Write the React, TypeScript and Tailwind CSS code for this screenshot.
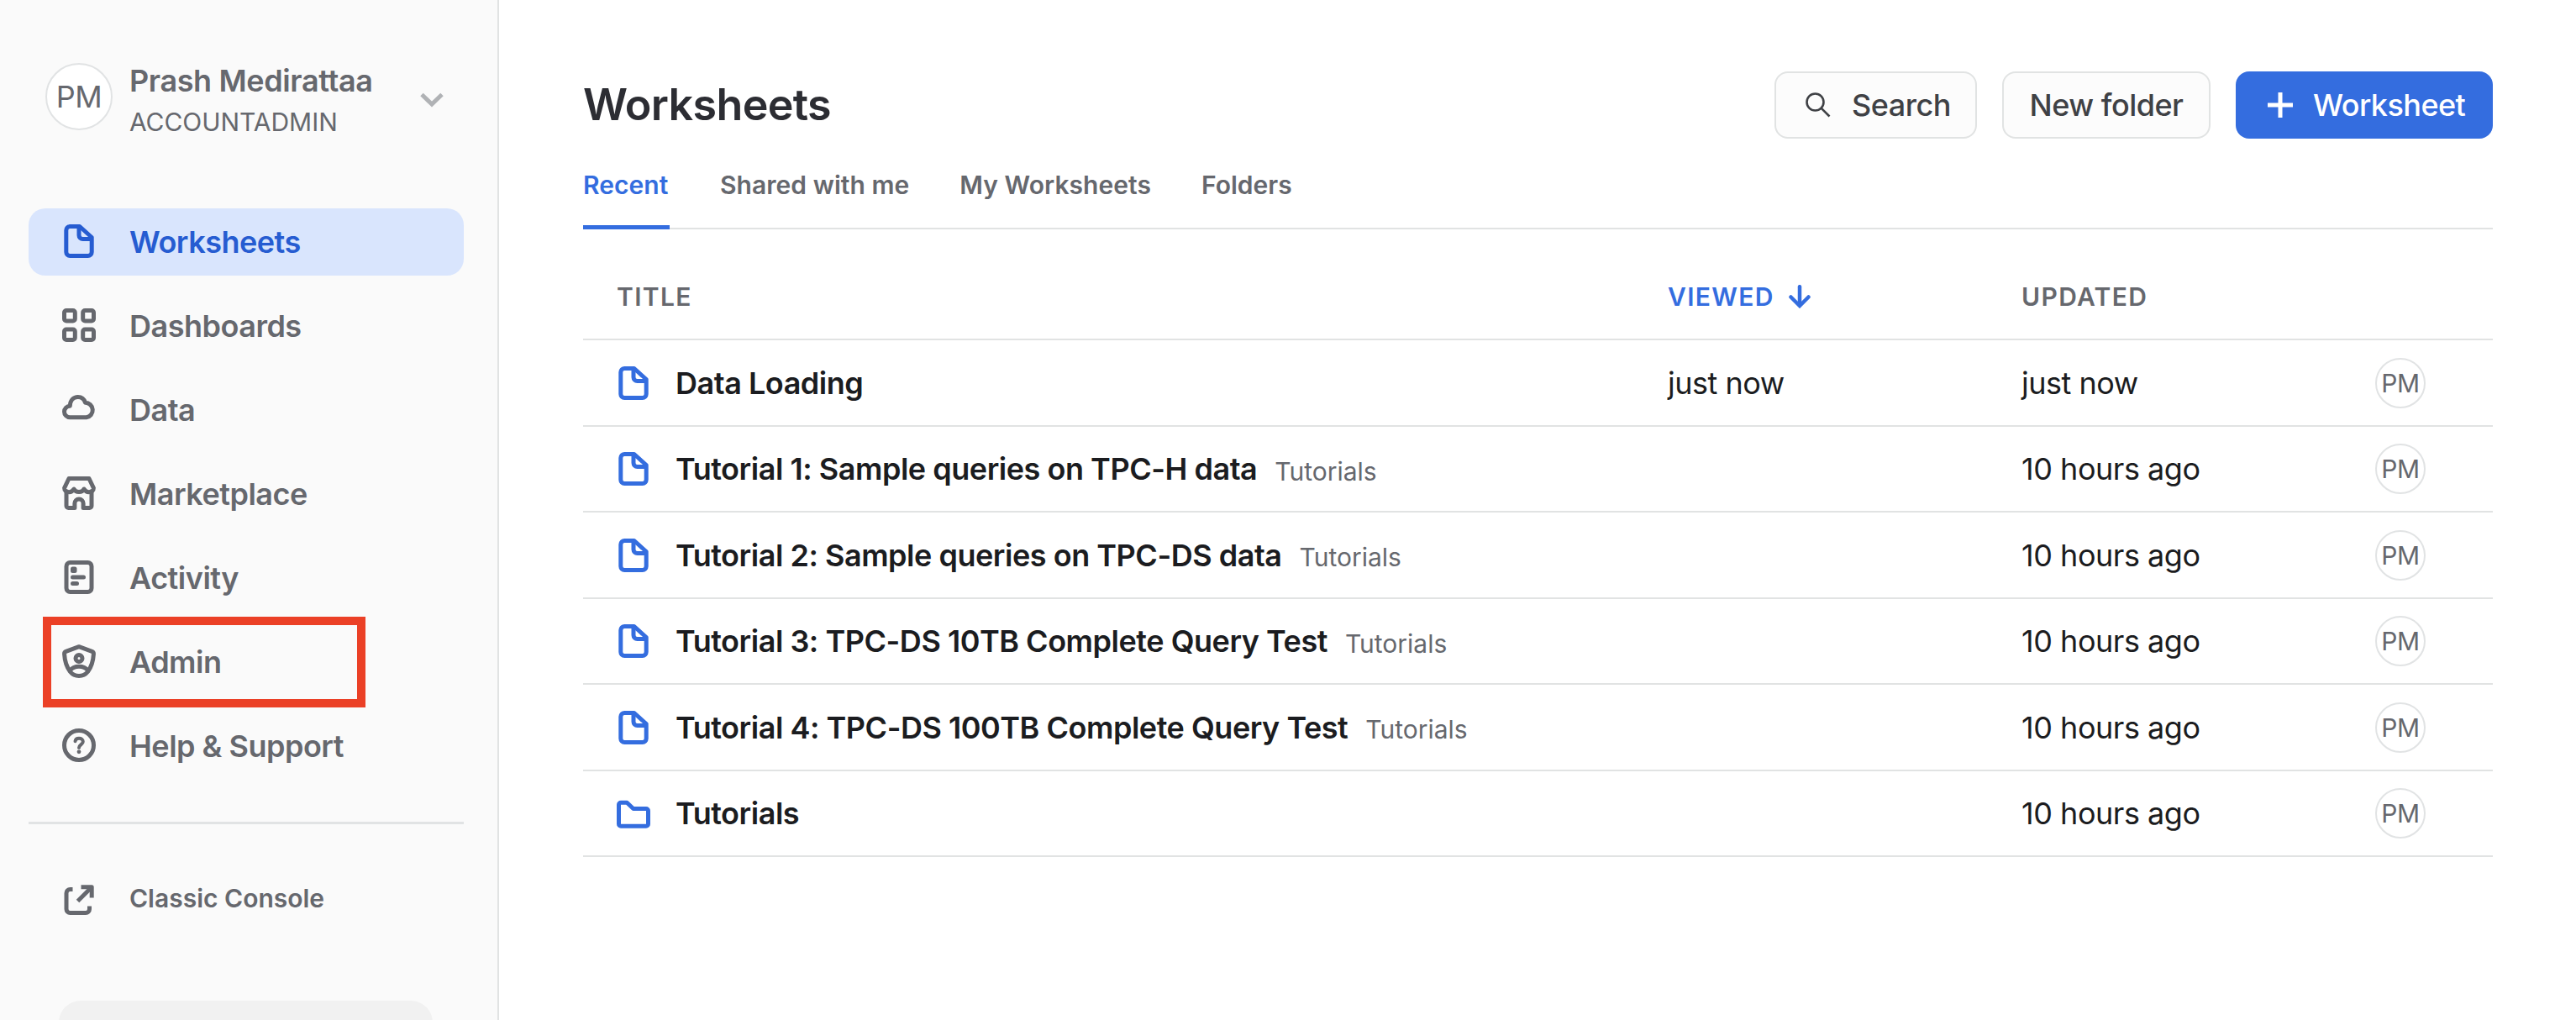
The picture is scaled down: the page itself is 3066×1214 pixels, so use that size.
import React from "react";

const stroke = {
  fill: "none",
  stroke: "currentColor",
  strokeWidth: 5,
  strokeLinejoin: "round" as const,
};

function Icon({ children, className = "" }: { children: React.ReactNode; className?: string }) {
  return (
    <svg viewBox="0 0 40 40" className={`size-10 shrink-0 ${className}`} {...stroke}>
      {children}
    </svg>
  );
}

const FileIcon = ({ className = "" }: { className?: string }) => (
  <Icon className={className}>
    <path d="M9 2.5H20.8L35.2 15.5V33a4.5 4.5 0 0 1-4.5 4.5H9.3A4.5 4.5 0 0 1 4.8 33V7A4.5 4.5 0 0 1 9.3 2.5Z" />
    <path d="M20 2.5V13a4.5 4.5 0 0 0 4.5 4.5H35.2" />
  </Icon>
);

const FolderIcon = () => (
  <Icon className="text-[#346ddf]">
    <path d="M5 7.2H12.2L19.8 14.5H35A2.5 2.5 0 0 1 37.5 17V32.7A2.5 2.5 0 0 1 35 35.2H5A2.5 2.5 0 0 1 2.5 32.7V9.7A2.5 2.5 0 0 1 5 7.2Z" />
  </Icon>
);

const DashIcon = () => (
  <Icon>
    <rect x="2.5" y="2.5" width="12.8" height="12.5" rx="2.5" />
    <rect x="24.7" y="2.5" width="12.8" height="12.5" rx="2.5" />
    <rect x="2.5" y="25" width="12.8" height="12.5" rx="2.5" />
    <rect x="24.7" y="25" width="12.8" height="12.5" rx="2.5" />
  </Icon>
);

const CloudIcon = () => (
  <Icon>
    <path d="M9.3 29.8A6.8 6.8 0 0 1 9.3 16.2C9.6 9.3 13.5 5.5 18.8 5.5C23 5.5 26.2 8 27.5 12.3A8.8 8.8 0 0 1 28.8 29.8Z" />
  </Icon>
);

const StoreIcon = () => (
  <Icon>
    <path d="M8 2.5H32L37.4 13.8C37.4 19.5 29 20.5 26 15C24 19.8 16 19.8 14 15C11 20.5 2.6 19.5 2.6 13.8Z" />
    <path d="M5 18V35A2.5 2.5 0 0 0 7.5 37.5H14.9V32A5 5 0 0 1 25.1 32V37.5H32.5A2.5 2.5 0 0 0 35 35V18" />
  </Icon>
);

const ActivityIcon = () => (
  <Icon>
    <rect x="5" y="2.5" width="30" height="35" rx="4.5" />
    <rect x="10" y="7.5" width="7.5" height="7.5" rx="2.5" fill="currentColor" stroke="none" />
    <path d="M12.5 20H25.5M12.5 27.5H17.5" strokeLinecap="round" />
  </Icon>
);

const ShieldIcon = () => (
  <Icon>
    <path d="M20 2.7L35.5 8.4A3 3 0 0 1 37.4 11.5C37 19 34.5 27 30.5 32.5C27.5 36.2 24 37.5 20 37.5S12.5 36.2 9.5 32.5C5.5 27 3 19 2.6 11.5A3 3 0 0 1 4.5 8.4Z" />
    <circle cx="20" cy="16.5" r="4" />
    <path d="M9.5 31C12 27.5 15.5 26.3 20 26.3S28 27.5 30.5 31" />
  </Icon>
);

const HelpIcon = () => (
  <Icon>
    <circle cx="20" cy="20" r="17.5" />
    <path
      d="M15.5 15.3C15.8 13 17.6 11.8 20 11.8C22.7 11.8 24.8 13.2 24.8 15.8C24.8 19 20 19.3 20 23"
      strokeWidth="4"
      strokeLinecap="round"
    />
    <circle cx="20" cy="27.8" r="2.4" fill="currentColor" stroke="none" />
  </Icon>
);

const ExternalIcon = () => (
  <Icon>
    <path d="M12.5 5.5H9.5A4.5 4.5 0 0 0 5 10V29A4.5 4.5 0 0 0 9.5 33.5H28A4.5 4.5 0 0 0 32.5 29V25.5" />
    <path d="M22.5 2.7H35.2V15.5" />
    <path d="M35 3L18.5 19.5" />
  </Icon>
);

const navItems = [
  { label: "Worksheets", icon: <FileIcon />, active: true },
  { label: "Dashboards", icon: <DashIcon /> },
  { label: "Data", icon: <CloudIcon /> },
  { label: "Marketplace", icon: <StoreIcon /> },
  { label: "Activity", icon: <ActivityIcon /> },
  { label: "Admin", icon: <ShieldIcon />, marked: true },
  { label: "Help & Support", icon: <HelpIcon /> },
];

const rows = [
  { title: "Data Loading", viewed: "just now", updated: "just now" },
  { title: "Tutorial 1: Sample queries on TPC-H data", folder: "Tutorials", updated: "10 hours ago" },
  { title: "Tutorial 2: Sample queries on TPC-DS data", folder: "Tutorials", updated: "10 hours ago" },
  { title: "Tutorial 3: TPC-DS 10TB Complete Query Test", folder: "Tutorials", updated: "10 hours ago" },
  { title: "Tutorial 4: TPC-DS 100TB Complete Query Test", folder: "Tutorials", updated: "10 hours ago" },
  { title: "Tutorials", updated: "10 hours ago", isFolder: true },
];

function Sidebar() {
  return (
    <aside className="flex h-full w-[594px] shrink-0 flex-col overflow-hidden border-r-2 border-[#e1e3e3] bg-[#fafafa] pr-10 pl-[34px] text-[#66686e]">
      <div className="mt-[75px] flex h-20 items-center pl-5">
        <div className="flex size-20 shrink-0 items-center justify-center rounded-full border-2 border-[#e1e3e4] bg-white text-[36px] tracking-[-0.45px]">
          PM
        </div>
        <div className="mt-[9px] ml-5 w-[346px]">
          <div className="text-[36px] leading-[50px] font-semibold tracking-[-0.38px]">Prash Medirattaa</div>
          <div className="text-[30px] leading-[48px] tracking-[-0.05px]">ACCOUNTADMIN</div>
        </div>
        <svg viewBox="0 0 28 18" className="mt-2 h-[18px] w-7" fill="none" stroke="#b0b2b5" strokeWidth="5">
          <path d="M2 2.5L14 14L26 2.5" />
        </svg>
      </div>
      <nav className="mt-[93px] flex flex-col gap-5">
        {navItems.map((item) => (
          <div
            key={item.label}
            className={`relative flex h-20 items-center rounded-[20px] pl-10 ${item.active ? "bg-[#d9e5fd] text-[#265cd1]" : ""}`}
          >
            <span className="-mt-0.5">{item.icon}</span>
            <span className="ml-10 text-[36px] leading-none font-semibold tracking-[-0.5px]">{item.label}</span>
            {item.marked && <div className="absolute top-[-14px] left-[17px] h-[108px] w-[384px] border-[10px] border-[#eb4026]" />}
          </div>
        ))}
      </nav>
      <div className="mt-[50px] h-[3px] shrink-0 bg-[#e1e3e4]" />
      <div className="mt-[72px] flex h-10 shrink-0 items-center pl-10">
        <ExternalIcon />
        <span className="-mt-2 ml-10 text-[30px] leading-none font-semibold">Classic Console</span>
      </div>
      <div className="mt-[98px] mr-[37px] ml-9 h-20 shrink-0 rounded-[26px] bg-[#f1f1f1]" />
    </aside>
  );
}

function Header() {
  return (
    <header className="flex h-20 items-center">
      <h1 className="mr-auto text-[52px] leading-none font-semibold tracking-[-0.65px] text-[#2c2d33]">Worksheets</h1>
      <button className="flex h-20 w-[241px] items-center rounded-2xl border-2 border-[#e1e3e3] bg-[#fcfcfc] pl-[35px] text-[36px] font-medium tracking-[-0.5px] text-[#3f4145]">
        <svg viewBox="0 0 30 30" className="size-[30px]" fill="none" stroke="currentColor" strokeWidth="2.6">
          <circle cx="11.5" cy="11.5" r="10" />
          <path d="M18.8 18.8L28.5 28.5" />
        </svg>
        <span className="ml-[25px]">Search</span>
      </button>
      <button className="ml-[30px] h-20 w-[248px] rounded-2xl border-2 border-[#e1e3e3] bg-[#fcfcfc] text-[36px] font-medium tracking-[-0.5px] text-[#3f4145]">
        New folder
      </button>
      <button className="ml-[30px] flex h-20 w-[306px] items-center rounded-2xl bg-[#346ddf] pl-[38px] text-[36px] font-medium tracking-[-0.55px] text-white">
        <svg viewBox="0 0 30 30" className="size-[30px]" fill="none" stroke="currentColor" strokeWidth="5">
          <path d="M15 0V30M0 15H30" />
        </svg>
        <span className="ml-6">Worksheet</span>
      </button>
    </header>
  );
}

const columns = "grid grid-cols-[1291px_421px_421px_1fr] items-center border-b-2 border-[#e1e3e3]";

export default function App() {
  return (
    <div className="flex h-[1214px] w-[3066px] overflow-hidden bg-white font-['Inter',sans-serif]">
      <Sidebar />
      <main className="flex w-[2373px] flex-col pt-[85px] pl-[100px]">
        <Header />
        <div className="mt-[27px] flex h-[81px] gap-[60px] border-b-2 border-[#e1e3e3] text-[30px] leading-[56px] font-semibold tracking-[0.04px] text-[#66686e]">
          <div className="h-[81px] w-[103px] border-b-[5px] border-[#346ddf] text-[#346ddf]">Recent</div>
          <div>Shared with me</div>
          <div>My Worksheets</div>
          <div>Folders</div>
        </div>
        <div className={`${columns} h-[132px] pt-[30px] text-[30px] leading-none font-semibold tracking-[1.35px] text-[#66686e]`}>
          <div className="pl-10">TITLE</div>
          <div className="flex items-center gap-[17px] text-[#346ddf]">
            VIEWED
            <svg viewBox="0 0 26 28" className="h-7 w-[26px]" fill="none" stroke="currentColor" strokeWidth="4.5">
              <path d="M13 2.2V24" strokeLinecap="round" />
              <path d="M2.5 14.5L13 25L23.5 14.5" strokeLinecap="round" />
            </svg>
          </div>
          <div>UPDATED</div>
        </div>
        <div>
          {rows.map((row) => (
            <div
              key={row.title}
              className={`${columns} text-[36px] leading-none tracking-[-0.47px] text-[#1b1c20] odd:h-[103px] even:h-[102px]`}
            >
              <div className="flex items-center pl-10">
                {row.isFolder ? <FolderIcon /> : <FileIcon className="text-[#346ddf]" />}
                <span className="ml-[30px] font-semibold">{row.title}</span>
                {row.folder && <span className="mt-[5px] ml-[21px] text-[30px] tracking-normal text-[#66686e]">{row.folder}</span>}
              </div>
              <div>{row.viewed}</div>
              <div>{row.updated}</div>
              <div className="flex size-[60px] items-center justify-center rounded-full border-2 border-[#e1e3e4] text-[30px] text-[#66686e]">
                PM
              </div>
            </div>
          ))}
        </div>
      </main>
    </div>
  );
}
